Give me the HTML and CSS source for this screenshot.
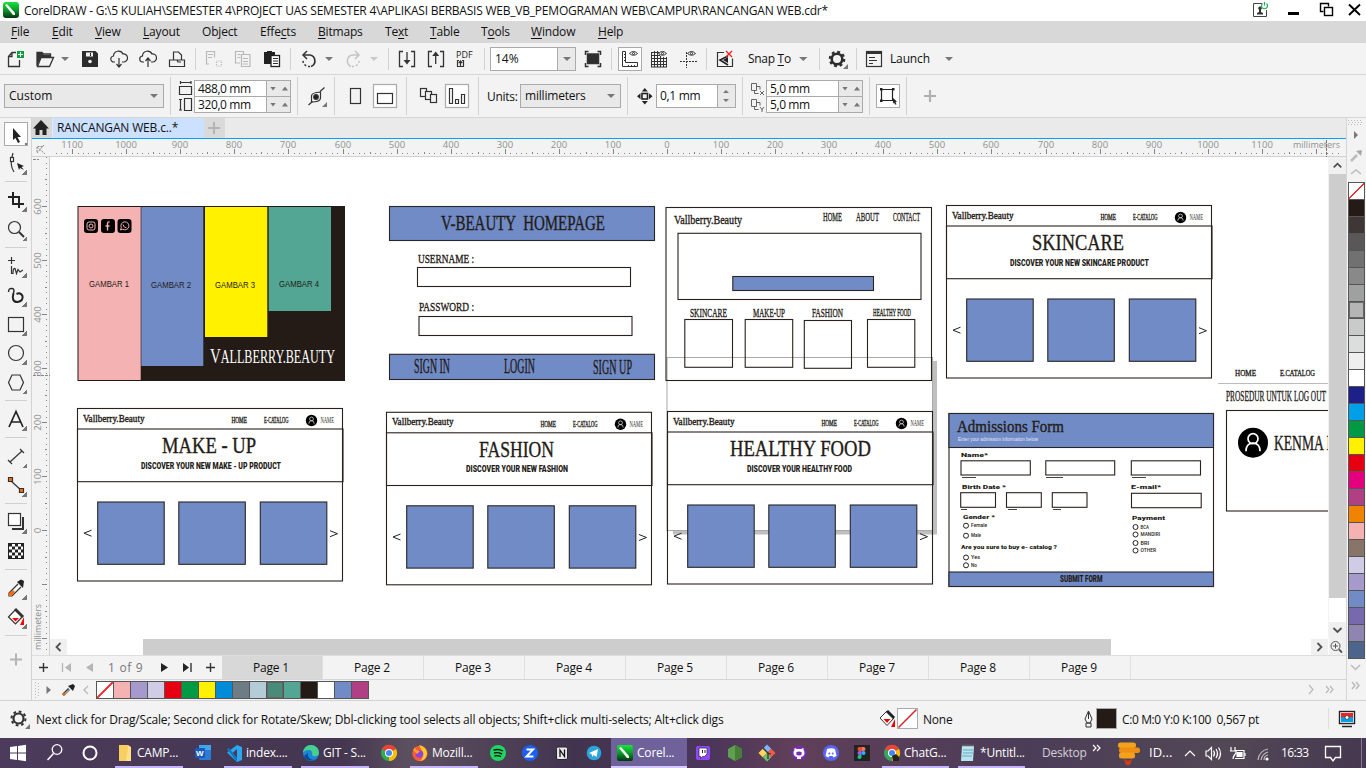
FILE: index.html
```
<!DOCTYPE html>
<html lang="en">
<head>
<meta charset="utf-8">
<title>CorelDRAW</title>
<link rel="stylesheet" href="styles.css">
</head>
<body>
<div class="app">
<header class="titlebar">
  <svg viewBox="0 0 24 21"><defs><linearGradient id="cg" x1="0" y1="0" x2="0" y2="1"><stop offset="0" stop-color="#19e33b"/><stop offset=".5" stop-color="#0a9a2c"/><stop offset="1" stop-color="#04330f"/></linearGradient></defs><rect x="3" y="2" width="16" height="16" rx="3" fill="url(#cg)"/><path d="M5 5l2-1 8 9v2h-2z" fill="#fff"/></svg>
  <span class="title">CorelDRAW - G:\5 KULIAH\SEMESTER 4\PROJECT UAS SEMESTER 4\APLIKASI BERBASIS WEB_VB_PEMOGRAMAN WEB\CAMPUR\RANCANGAN WEB.cdr*</span>
  <span class="grow"></span>
  <svg viewBox="1248 0 28 21"><path d="M1262 3.500h-8.500v13h13V10" fill="none" stroke="#444"/><path d="M1257 14.500v-1.500l2-1v-2l-1-2 2-2 2 2-1 2v2l2 1v1.500z" fill="#333"/><path d="M1262.500 3.500a3 3 0 1 0 4 0M1264.500 2v3.500" fill="none" stroke="#1fae4b" stroke-width="1.200"/></svg>
  <svg viewBox="1276 0 90 21" fill="none" stroke="#000"><path d="M1288 13.500h11" stroke-width="3"/><path d="M1323.500 11.500h-3v-8h8v3" stroke-width="1.400"/><rect x="1324.500" y="7.500" width="8" height="8" stroke-width="1.400"/><path d="M1349 4.500l11 10.500M1360 4.500l-11 10.500" stroke-width="1.900"/></svg>
</header>
<nav class="menubar"><span><u>F</u>ile</span><span><u>E</u>dit</span><span><u>V</u>iew</span><span><u>L</u>ayout</span><span>Ob<u>j</u>ect</span><span>Effe<u>c</u>ts</span><span><u>B</u>itmaps</span><span>Te<u>x</u>t</span><span><u>T</u>able</span><span>T<u>o</u>ols</span><span><u>W</u>indow</span><span><u>H</u>elp</span></nav>

<div class="toolbar">
  <svg viewBox="0 43 30 31"><path d="M16 52.500h-4l-3.500 4v10h11V60M8.500 56.500h3.500v-4" fill="none" stroke="#333" stroke-width="1.300"/><rect x="17" y="51" width="7" height="7" fill="#0b9e3a"/><path d="M18 54.500h5M20.500 52v5" stroke="#fff"/></svg>
  <svg viewBox="30 43 28 31"><path d="M37 66V52.500h5l1.500 1.500h7V57" fill="none" stroke="#333" stroke-width="1.300"/><path d="M37.500 66.500l3.500-9h12.500l-4 9z" fill="#f3f3f3" stroke="#333" stroke-width="1.300"/><path d="M37 66V53h5l2 2h6v2h-9z" fill="#333"/></svg>
  <svg viewBox="58 43 17 31"><path class="dd" d="M61 57h8l-4 4z"/></svg>
  <svg viewBox="75 43 29 31"><path d="M82 51h13.500l2.500 2.500V67H82z" fill="#2d2d2d"/><path d="M86 52.500h7v4h-7z" fill="#f3f3f3"/><path d="M90.500 53v3" stroke="#222"/><circle cx="90" cy="61.500" r="1.800" fill="#f3f3f3"/></svg>
  <svg viewBox="104 43 29 31" class="ln"><path d="M115 62h-1a3 3 0 0 1-.5-6 5 5 0 0 1 9.500-2 4 4 0 0 1 1 8h-2M119 58v8M116.500 64l2.500 3 2.500-3"/></svg>
  <svg viewBox="133 43 29 31" class="ln"><path d="M144 62h-1a3 3 0 0 1-.5-6 5 5 0 0 1 9.500-2 4 4 0 0 1 1 8h-2M148 67v-9M145.500 61l2.500-3 2.500 3"/></svg>
  <svg viewBox="162 43 33 31" class="ln"><path d="M173.500 60v-8h5l3 3v5M169.500 60v6.500h15V60zM174 60h3l1 2h3"/></svg>
  <i class="sep"></i>
  <svg viewBox="196 43 94 31" fill="none"><g stroke="#b9b9b9" stroke-width="1.200"><path d="M209 64h-2.500V51.500h8v6M208 54.500h5M208 57.500h4"/><rect x="216.500" y="61" width="5" height="5" stroke-dasharray="1 1"/><path d="M240 63h-4.500V51.500h8v3M237.500 54.500h3M237.500 57.500h3M241.500 54.500h8.500v12h-8.500zM243 58.500h5M243 61.500h5M243 64h5"/></g><path d="M264 52h3v-1h5v1h3v3h-4v9h-7z" fill="#222"/><rect x="271" y="55.500" width="8.500" height="11" fill="#fff" stroke="#222" stroke-width="1.300"/><path d="M273 58.500h5M273 61h5M273 63.500h5" stroke="#333"/></svg>
  <i class="sep"></i>
  <svg viewBox="291 43 97 31" fill="none"><path d="M304 55h6a6 6 0 0 1 1 11.500" stroke="#333" stroke-width="1.700"/><path d="M307 51l-4 4 4 4" stroke="#333" stroke-width="1.500"/><path d="M310 66.500a6 6 0 0 1-7-6" stroke="#333" stroke-width="1.500" stroke-dasharray="2 2"/><path class="dd" d="M325 57h8l-4 4z"/><g stroke="#c4c4c4" stroke-width="1.500"><path d="M358 55h-5a6 6 0 0 0-2 11.500M355 51l4 4-4 4"/><path d="M352 66.500a6 6 0 0 0 7-6" stroke-dasharray="2 2"/></g><path d="M370 57h8l-4 4z" fill="#c9c9c9"/></svg>
  <i class="sep"></i>
  <svg viewBox="389 43 61 31" fill="none" stroke="#333" stroke-width="1.300"><path d="M403 51.500h-3.500v15h3.500M411 51.500h3.500v15H411M407 52v10M432 51.500h-3.500v15h3.500M440 51.500h3.500v15H440M435.700 64V54" /><path d="M403.500 60h7L407 64.500zM432.200 56h7l-3.500-4.500z" fill="#333" stroke="none"/></svg>
  <svg viewBox="450 43 34 31" class="ln"><text x="456" y="58" class="pdf" textLength="16.500" lengthAdjust="spacingAndGlyphs">PDF</text><path d="M459 60.500h-1.500v6h6v-6H462M460.500 66v-4M458.800 63l1.700-2 1.700 2"/></svg>
  <i class="sep"></i>
  <div class="combo zoomlvl"><span>14%</span><b></b></div>
  <svg viewBox="577 43 34 31" fill="none" stroke="#333" stroke-width="1.500"><rect x="587.500" y="54" width="11" height="9.500" fill="#2d2d2d"/><path d="M585.500 55v-3.500h3M597.500 51.500h3V55M600.500 63v3.500h-3M588.500 66.500h-3V63"/></svg>
  <i class="sep"></i>
  <svg viewBox="612 43 94 31" fill="none"><rect x="618.500" y="47.500" width="23" height="23" fill="#fff" stroke="#aaa"/><g stroke="#333"><path d="M622.500 51.500h3v11h12v4h-15zM624 54.500h1.500M624 57.500h1.500M624 60.500h1.500M628.500 65v1M631.500 65v1M634.500 65v1" /><path d="M651.500 52v15M654.500 51v16M657.500 51v16M660.500 56v11M663.500 57v10M666.500 57v10M651 52.500h8M651 55.500h9M651 58.500h16M651 61.500h16M651 64.500h16M651 67h16"/><path d="M680 61.500h17M686.500 52v16" stroke-dasharray="2 1"/><path d="M629.500 53.500q4-4 8 0q-4 3.500-8 0zM658.500 53.500q4-4 8 0q-4 3.500-8 0zM687.500 53.500q4-4 8 0q-4 3.500-8 0z"/><circle cx="633.500" cy="53.500" r="1"/><circle cx="662.500" cy="53.500" r="1"/><circle cx="691.500" cy="53.500" r="1"/></g></svg>
  <i class="sep"></i>
  <svg viewBox="707 43 36 31" fill="none"><path d="M724 52.500h-6.500v14h15v-8" stroke="#333" stroke-width="1.200"/><path d="M728 56l-8 4 8 5" stroke="#222" stroke-width="1.600"/><path d="M723 60l5-3v6z" fill="#222"/><path d="M726 51l6 6M732 51l-6 6" stroke="#e22" stroke-width="1.400"/></svg>
  <span class="lab snap">Snap <u>T</u>o</span>
  <svg viewBox="794 43 25 31"><path class="dd" d="M799 57h8.500l-4.200 4z"/></svg>
  <i class="sep"></i>
  <svg viewBox="820 43 36 31"><circle cx="837" cy="59" r="5.300" fill="none" stroke="#2d2d2d" stroke-width="2.600"/><circle cx="837" cy="59" r="7.200" fill="none" stroke="#2d2d2d" stroke-width="2.200" stroke-dasharray="2.830 2.830"/><path d="M843 69h5v-5z" fill="#777"/></svg>
  <i class="sep"></i>
  <svg viewBox="857 43 31 31" fill="none" stroke="#333"><rect x="866.500" y="51.500" width="15" height="15" stroke-width="1.200"/><path d="M867 53h14" stroke-width="2"/><path d="M869 57.500h6M869 60.500h8M869 63.500h4"/></svg>
  <span class="lab launch">Launch</span>
  <svg viewBox="940 43 25 31"><path class="dd" d="M945 57h8l-4 4z"/></svg>
</div>

<div class="propbar">
  <div class="combo preset"><span>Custom</span><b></b></div>
  <i class="sep"></i>
  <svg viewBox="171 75 23 42" class="ln"><path d="M179.500 86.500h12v8h-12zM180 82.500h11M180.500 81v3M191 81v3M184.500 98.500h7v12h-7zM180.500 99v11M179 99.500h3M179 110h3"/></svg>
  <div class="pair"><span>488,0 mm</span><span>320,0 mm</span></div>
  <i class="sep m6"></i>
  <svg viewBox="298 75 36 42" class="ln"><path d="M308.500 105l4-3.500M320 91.500l4.500-4"/><path d="M311.500 102v-6q0-3.500 9-4v6q0 4-9 4z"/><circle cx="316" cy="97" r="2.300" fill="#222"/><path d="M322 107h5v-5z" fill="#777" stroke="none"/></svg>
  <i class="sep"></i>
  <svg viewBox="335 75 71 42" class="ln"><rect x="350.500" y="88.500" width="10" height="15"/><rect x="373.500" y="84.500" width="23" height="23" fill="#fff" stroke="#aaa"/><rect x="377.500" y="93.500" width="15" height="10"/></svg>
  <i class="sep"></i>
  <svg viewBox="407 75 71 42" class="ln"><g fill="#f3f3f3"><rect x="420.500" y="88.500" width="6" height="8"/><rect x="425.500" y="91.500" width="6" height="8"/><rect x="430.500" y="94.500" width="6" height="8"/></g><rect x="445.500" y="84.500" width="23" height="23" fill="#fff" stroke="#aaa"/><path d="M449.500 88.500h3v15h-3zM455.500 99.500h3v4h-3zM461.500 94.500h3v9h-3z"/></svg>
  <i class="sep"></i>
  <span class="lab units">Units:</span>
  <div class="combo unit"><span>millimeters</span><b></b></div>
  <i class="sep m6"></i>
  <svg viewBox="628 75 28 42"><rect x="642" y="93.500" width="5.500" height="5.500" fill="none" stroke="#222" stroke-width="1.600"/><path d="M644.800 88l3 3.500h-6zM644.800 104.500l3-3.500h-6zM637 96.300l3.500-3v6zM652.500 96.300l-3.500-3v6z" fill="#222"/></svg>
  <div class="spin"><span>0,1 mm</span><b></b></div>
  <i class="sep m6"></i>
  <svg viewBox="743 75 23 42" fill="none" stroke="#666"><path d="M751.500 83.500h5v7h-5zM757 86.500h3v3M754.500 91v2.500h4M751.500 99.500h5v7h-5zM757 102.500h3v3M754.500 107v2.500h4M760 91l4 4M764 91l-4 4M760 107l2 2.500 2-2.500M762 109v3"/></svg>
  <div class="pair"><span>5,0 mm</span><span>5,0 mm</span></div>
  <i class="sep m6"></i>
  <svg viewBox="870 75 36 42" fill="none"><rect x="876.500" y="84.500" width="23" height="23" fill="#fff" stroke="#aaa"/><path d="M881.500 89.500h11v11h-11z" stroke="#222" stroke-width="1.200"/><g fill="#222"><path d="M880 88h2.500v2.500H880zM892 88h2.500v2.500H892zM880 99.500h2.500v2.500H880zM893 98l4 3.500-1.500.5 1 2.500h-1.500l-1-2-1 1z"/></g></svg>
  <i class="sep"></i>
  <svg viewBox="907 75 40 42"><path d="M924 96h12M930 90v12" stroke="#b0b0b0" stroke-width="2.200"/></svg>
</div>

<main class="work">
  <aside class="toolbox">
    <div class="tool on"><svg viewBox="0 0 32 29"><path d="M12 8v12l2.500-2 2.500 5 2-1-2.500-5h3.500z" fill="#222"/></svg></div>
    <div class="tool"><svg viewBox="0 0 32 29" class="ln"><path d="M13 4q-4 12 1 19"/><rect x="10.500" y="8.500" width="3" height="4" fill="#fff"/><path d="M17 14l7 3-2.500 1 2.500 3-4-2-1 2z" fill="#222" stroke="none"/></svg></div>
    <hr>
    <div class="tool"><svg viewBox="0 0 32 29" fill="none" stroke="#222" stroke-width="2"><path d="M13 6v12h11M8 11h11v11"/></svg></div>
    <div class="tool"><svg viewBox="0 0 32 29" class="ln"><circle cx="14.500" cy="12.500" r="6"/><path d="M19 17l5 5" stroke-width="2"/></svg></div>
    <hr>
    <div class="tool"><svg viewBox="0 0 32 29" class="ln"><path d="M8 8.500h7M11.500 5v7M11.500 14v7.500h1.500q0-6 2-5l1.500 5 1.500-4 2 2.500 3-2"/></svg></div>
    <div class="tool"><svg viewBox="0 0 32 29" fill="none" stroke="#222"><path d="M8.500 11q0-4 3.500-3.500 3 .5 1.500 4.500" stroke-width="1.400"/><path d="M13.500 12q-2.500 9 4 9 6-1 5-6-2-4-6-2" stroke-width="2"/></svg></div>
    <div class="tool"><svg viewBox="0 0 32 29" class="ln"><rect x="8.500" y="7.500" width="15" height="14"/></svg></div>
    <div class="tool"><svg viewBox="0 0 32 29" class="ln"><circle cx="16" cy="14" r="7.500"/></svg></div>
    <div class="tool"><svg viewBox="0 0 32 29" class="ln"><path d="M12 7h8l3.500 7.500L20 22h-8l-3.500-7.500z"/></svg></div>
    <hr>
    <div class="tool"><svg viewBox="0 0 32 29" fill="none" stroke="#222" stroke-width="1.700"><path d="M9 22l7-15.500L23 22M11.500 17h9"/></svg></div>
    <hr>
    <div class="tool"><svg viewBox="0 0 32 29" class="ln"><path d="M10 20L22 9M8 18l4 4M20 7l4 4"/></svg></div>
    <div class="tool"><svg viewBox="0 0 32 29" class="ln"><path d="M11 10l11 10"/><path d="M8.500 6.500h4v4h-4zM19.500 17.500h4v4h-4z" fill="#ff6a00"/></svg></div>
    <hr>
    <div class="tool"><svg viewBox="0 0 32 29" class="ln"><path d="M23 9v12H12" stroke-width="2"/><rect x="8.500" y="5.500" width="12" height="12" fill="#fff"/></svg></div>
    <div class="tool plain"><svg viewBox="0 0 32 29"><rect x="8.500" y="6.500" width="15" height="15" fill="#fff" stroke="#222"/><path d="M9 8h14M9 14h14M9 20h14" stroke="#222" stroke-width="3" stroke-dasharray="3 3"/><path d="M12 11h12M12 17h12" stroke="#222" stroke-width="3" stroke-dasharray="3 3"/></svg></div>
    <hr>
    <div class="tool"><svg viewBox="0 0 32 29" class="ln"><path d="M18 10l-9 9v3h3l9-9" fill="#fff"/><path d="M9 22v-3l4-3 2 2-4 4z" fill="#f60" stroke="none"/><path d="M17 8l6 6 1-7-3-1.500z" fill="#222" stroke="none"/></svg></div>
    <div class="tool"><svg viewBox="0 0 32 29" class="ln"><path d="M8.500 14l7-7.500 7 7-7 7.500z" fill="#fff"/><path d="M15 6l8 8" stroke-width="3"/><path d="M12 15h7l-3.500 3.500zM24 14v8h-4z" fill="#f00" stroke="none"/></svg></div>
    <hr>
    <div class="tool plain last"><svg viewBox="0 0 32 29"><path d="M10 14.500h12M16 8.500v12" stroke="#b4b4b4" stroke-width="2"/></svg></div>
  </aside>
  <section class="center">
    <div class="tabs">
      <div class="home"><svg viewBox="0 0 20 20"><path d="M1 10.500L9 2l8 8.500h-2.500V17h-4v-5h-3v5h-4v-6.500z" fill="#222"/></svg></div>
      <div class="doc">RANCANGAN WEB.c..*</div>
      <div class="add"><svg viewBox="0 0 21 20"><path d="M4 10h12M10 4v12" stroke="#b4b4b4" stroke-width="2"/></svg></div>
    </div>
    <svg class="hruler" viewBox="32 139 1314 18" id="hr"></svg>
    <div class="view">
      <svg class="vruler" viewBox="32 157 18 498" id="vr"></svg>
      <div class="stage">
        <div class="stagerow">
          <svg class="canvas" viewBox="50 157 1278 482" id="cv"></svg>
          <div class="vscroll"><svg viewBox="0 0 17 18"><path d="M4.500 11l4-4 4 4" class="chev"/></svg><i></i><span></span><svg viewBox="0 0 17 17"><path d="M4.500 6l4 4 4-4" class="chev"/></svg></div>
        </div>
        <div class="hscroll"><svg viewBox="0 0 17 16"><path d="M10.500 4l-4 4 4 4" class="chev"/></svg><span></span><i></i><em></em><svg viewBox="0 0 17 16"><path d="M6.500 4l4 4-4 4" class="chev"/></svg><svg viewBox="0 0 17 16"><g fill="none" stroke="#555"><circle cx="6.500" cy="7" r="4.500"/><path d="M4 7h5M6.500 4.500v5"/><path d="M10 10.500l3 3" stroke-width="1.800"/></g></svg></div>
      </div>
    </div>
    <div class="pages">
      <svg viewBox="32 655 76 24"><path d="M39 666.500h9M43.500 662v9" stroke="#333" stroke-width="1.400"/><path d="M62.500 662v9" stroke="#b5b5b5" stroke-width="1.300"/><path d="M71 662v9l-6-4.500zM93 662v9l-7-4.500z" fill="#b5b5b5"/></svg>
      <span class="count">1 of 9</span>
      <svg viewBox="150 655 72 24"><path d="M161 662v9l7-4.500zM183 662v9l6-4.500z" fill="#222"/><path d="M191 662v9M206 666.500h9M210.500 662v9" stroke="#333" stroke-width="1.400"/></svg>
      <b class="cur">Page 1</b><b>Page 2</b><b>Page 3</b><b>Page 4</b><b>Page 5</b><b>Page 6</b><b>Page 7</b><b>Page 8</b><b>Page 9</b>
    </div>
    <div class="docpal">
      <svg viewBox="32 680 64 20"><path d="M35.500 682v16M38.500 683v15" stroke="#bbb" stroke-dasharray="1 2"/><path d="M46.500 686v8l4.500-4z" fill="#777"/><path d="M63 695l6-6" stroke="#333" stroke-width="2.600"/><path d="M64 694.500l5-5" stroke="#fff"/><path d="M68 686l5 5 2-5-2-2z" fill="#222"/><path d="M63 695l2-2" stroke="#f60" stroke-width="2"/><path d="M88 686l-4 4 4 4" fill="none" stroke="#bbb" stroke-width="1.400"/></svg>
      <div class="swrow" id="sw1"></div>
      <span class="grow"></span>
      <svg viewBox="1302 680 44 20" fill="none" stroke="#bbb" stroke-width="1.300"><path d="M1309 685l4 4.500-4 4.500M1326 686l3 3.500-3 3.500M1330 686l3 3.500-3 3.500"/></svg>
    </div>
  </section>
  <aside class="palette">
    <svg viewBox="1347 118 19 64"><path d="M1348 120.500h15M1349 122.500h15M1348 124.500h15" stroke="#bbb" stroke-dasharray="1 2"/><path d="M1354 131v8l4-4z" fill="#777"/><path d="M1351 161l6-6" stroke="#bbb" stroke-width="2.500"/><path d="M1356 151l5 5 1-5-1-1z" fill="#aaa"/><path d="M1351 174l5-4 5 4" fill="none" stroke="#bbb" stroke-width="1.500"/></svg>
    <div class="swcol" id="sw2"></div>
    <svg viewBox="1347 658 19 42" fill="none" stroke="#bbb" stroke-width="1.500"><path d="M1351 664l4.500 4.500 4.500-4.500M1352 681l3 3.500-3 3.500M1356 681l3 3.500-3 3.500"/></svg>
  </aside>
</main>

<footer class="status">
  <svg viewBox="0 701 36 37"><circle cx="18.500" cy="718.500" r="5" fill="none" stroke="#333" stroke-width="2.200"/><circle cx="18.500" cy="718.500" r="7" fill="none" stroke="#333" stroke-width="2" stroke-dasharray="2.750 2.750"/><path d="M25 729h5v-5z" fill="#777"/></svg>
  <span class="hint">Next click for Drag/Scale; Second click for Rotate/Skew; Dbl-clicking tool selects all objects; Shift+click multi-selects; Alt+click digs</span>
  <svg viewBox="875 701 22 37"><path d="M880 718l7-7 7 7-7 7.500z" fill="#fff" stroke="#333"/><path d="M887 711l7 7" stroke="#222" stroke-width="3"/><path d="M883.500 719h7l-3.500 4zM895 719v8h-4z" fill="#e00"/></svg>
  <svg viewBox="897 701 26 37"><rect x="897.500" y="708.500" width="20" height="20" fill="#fff" stroke="#aaa"/><path d="M898.500 727.500l18-18" stroke="#c22" stroke-width="1.500"/></svg>
  <span class="none">None</span>
  <svg viewBox="1080 701 42 37"><path d="M1088.500 711l-3.500 8 2 4h3l2-4zM1088.500 712v7M1086 723h5v4h-5z" fill="none" stroke="#333"/><rect x="1096.500" y="708.500" width="20" height="20" fill="#241b16" stroke="#aaa"/></svg>
  <span class="cmyk">C:0 M:0 Y:0 K:100&nbsp; 0,567 pt</span>
  <span class="grow"></span>
  <svg viewBox="1327 701 39 37"><path d="M1328.500 708v21" stroke="#ddd"/><rect x="1339.500" y="711.500" width="15" height="12" fill="#fff" stroke="#222" stroke-width="1.400"/><path d="M1341 713h12v4h-12z" fill="#e22"/><path d="M1341 717h12v5h-12z" fill="#00a0e9"/><circle cx="1347" cy="717.500" r="2" fill="#fff" stroke="#333" stroke-width=".7"/><path d="M1342 726.500h10" stroke="#222" stroke-width="1.500"/></svg>
</footer>

<div class="taskbar">
  <svg viewBox="0 738 115 30"><path d="M10 747l7-1v6.500h-7zM18 745.900l8-1.100v7.700h-8zM10 753.500h7v6.500l-7-1zM18 753.500h8v7.700l-8-1.100z" fill="#fff"/><g fill="none" stroke="#fff"><circle cx="57" cy="749.500" r="4.800" stroke-width="1.300"/><path d="M53.500 753.500l-6 6.500" stroke-width="1.500"/><circle cx="90" cy="753" r="6.500" stroke-width="2"/></g></svg>
  <div class="task open"><svg viewBox="115 738 22 30"><path d="M119 745h9l3 2v14h-12z" fill="#ffe08a"/><path d="M119 745h9v3l-2 13h-7z" fill="#f8cf5e"/></svg><span>CAMP...</span></div>
  <svg viewBox="183 738 41 30"><rect x="199" y="745" width="12" height="15" rx="1" fill="#2b7cd3"/><path d="M199 745h12v5h-12z" fill="#41a5ee"/><rect x="195" y="748" width="10" height="10" rx="1" fill="#185abd"/><text x="196" y="756" class="tiny">W</text></svg>
  <div class="task open"><svg viewBox="224 738 22 30"><path d="M237 745l5 2v13l-5 2-10-9.500z" fill="#2aa7f0"/><path d="M237 749l-5 4.500 5 4.500z" fill="#4a3c55"/><path d="M227 749l2-1 8 10v4z" fill="#0c78c4"/></svg><span>index....</span></div>
  <i class="g9"></i>
  <div class="task open"><svg viewBox="301 738 22 30"><circle cx="311" cy="753" r="8" fill="#1b86d8"/><path d="M303 753a8 8 0 0 1 16 0c0 4-6 4-7 2 1-3-1-5-3-5-3 0-5 1-6 3z" fill="#46cf8f"/><path d="M308 753q-1 6 6 7-8 2-10-4z" fill="#0c4a9a"/></svg><span>GIT - S...</span></div>
  <svg viewBox="369 738 41 30"><g transform="translate(389 753)"><use href="#chrome"/></g><defs><g id="chrome"><circle r="8" fill="#34a853"/><path d="M0 0L-7-4A8 8 0 0 1 7-4z" fill="#ea4335"/><path d="M0 0l7-4A8 8 0 0 1 0 8z" fill="#fbbc05"/><circle r="4" fill="#fff"/><circle r="3" fill="#4285f4"/></g></defs></svg>
  <div class="task open"><svg viewBox="410 738 22 30"><circle cx="420" cy="753.500" r="7.700" fill="#ff5a36"/><path d="M419 745q8 2 8 9-1 6-7 7 5-5 2-10z" fill="#ffca2c"/><circle cx="419.500" cy="754" r="3.800" fill="#8b45d8"/><path d="M413 750l2-3 1 3 4 1-3 3z" fill="#ff9d28"/></svg><span>Mozill...</span></div>
  <svg viewBox="478 738 133 30"><circle cx="498" cy="753" r="8" fill="#1ed760"/><path d="M493.500 750q5-1.500 9.500 1M494 753q4-1 8 1M494.500 756q3.500-1 6.500.7" stroke="#111" fill="none" stroke-width="1.400"/><circle cx="530" cy="753" r="8" fill="#1a5ff0"/><path d="M526.500 749.500h6.500l-6.500 7h7" stroke="#fff" fill="none" stroke-width="2"/><rect x="556.500" y="747" width="11" height="12.500" rx="1.500" fill="#e9e6ea" stroke="#2a2530"/><path d="M560 757v-7l4.500 6.500v-7" stroke="#111" fill="none" stroke-width="1.300"/><circle cx="594" cy="753" r="7.300" fill="#2ba3dc"/><path d="M589 753l9-4-1.500 8-3-2-1 2-1-3z" fill="#fff"/></svg>
  <div class="task active"><svg viewBox="611 738 26 30"><rect x="617" y="745" width="16" height="16" rx="2" fill="url(#cg)"/><path d="M619 748l2-1 8 9v2h-2z" fill="#fff"/></svg><span>Corel...</span></div>
  <svg viewBox="687 738 195 30"><rect x="696" y="746" width="14" height="14" rx="2" fill="#9146ff"/><path d="M699 748h8v6l-2.500 2.500h-2l-2 2v-2h-1.500z" fill="#fff" stroke="#222" stroke-width=".7"/><path d="M702.500 750v3M705 750v3" stroke="#222"/><path d="M735 745l7 4v8l-7 4-7-4v-8z" fill="#5fa04e"/><path d="M735 745l7 4v8l-7 4z" fill="#468038"/><g transform="rotate(45 767 753)"><path d="M761 747h6v6h-6z" fill="#80b3ff"/><path d="M767 747h6v6h-6z" fill="#f25b4a"/><path d="M761 753h6v6h-6z" fill="#ffd45c"/><path d="M767 753h6v6h-6z" fill="#6fc06a"/></g><path d="M763 748l5 5v6M768 753l3 1" stroke="#333" fill="none" stroke-width="1.300"/><circle cx="799" cy="753" r="7.500" fill="#7a2cb0"/><path d="M797 759v-2q-3.500-1-3.500-4 0-2 1-3v-2l2.500 1h4l2.500-1v2q1 1 1 3 0 3-3.500 4v2z" fill="#fff"/><path d="M796.500 752q2.500-1 5 0 1 3.500-2.500 3.500t-2.500-3.500z" fill="#7a2cb0"/><circle cx="831" cy="753" r="8" fill="#5865f2"/><path d="M827 749q4-1.500 8 0l1.500 7-3 1.500-1-1.500h-3l-1 1.500-3-1.500z" fill="#fff"/><circle cx="829.300" cy="753.500" r="1" fill="#5865f2"/><circle cx="832.700" cy="753.500" r="1" fill="#5865f2"/><rect x="854" y="745" width="16" height="16" fill="#222"/><path d="M861.500 747v4h-2a2 2 0 0 1 0-4z" fill="#f24e1e"/><path d="M861.500 747h2a2 2 0 0 1 0 4h-2z" fill="#ff7262"/><path d="M861.500 751v4h-2a2 2 0 0 1 0-4z" fill="#a259ff"/><circle cx="863.500" cy="753" r="2" fill="#1abcfe"/><path d="M861.500 755v2a2 2 0 1 1-2-2z" fill="#0acf83"/></svg>
  <div class="task open t2"><svg viewBox="882 738 22 30"><g transform="translate(892 753)"><use href="#chrome"/></g><path d="M892 756l4-2 3 3v4h-6z" fill="#222"/></svg><span>ChatG...</span></div>
  <i class="g9"></i>
  <div class="task open t2"><svg viewBox="958 738 22 30"><path d="M962 746h12l-1 15h-12z" fill="#b9e4ef"/><path d="M963 750h10M963 753h10M962 756h10" stroke="#64a9bd"/><path d="M962.500 745.500h12" stroke="#777" stroke-width="2" stroke-dasharray="1 1"/></svg><span>*Untitl...</span></div>
  <span class="desk">Desktop</span>
  <svg viewBox="1089 738 60 30"><path d="M1093 745l3 3-3 3M1097 745l3 3-3 3" fill="none" stroke="#fff" stroke-width="1.200"/><rect x="1118" y="742.500" width="18" height="5.500" rx="2.500" fill="#f4a21c"/><rect x="1119" y="747.500" width="21" height="5.500" rx="2.500" fill="#ee8f14"/><rect x="1119" y="752.500" width="16" height="6" rx="2.500" fill="#f4a21c"/><path d="M1124 759l4 2 4-2-2 6h-4z" fill="#d43a16"/></svg>
  <span class="idx">ID...</span>
  <svg viewBox="1180 738 101 30" fill="none" stroke="#fff" stroke-width="1.200"><path d="M1185 756l5-5 5 5"/><path d="M1206 751v5h2l3.500 3.500v-12L1208 751zM1213.500 750.500q2 3 0 6M1216 749q3 4.500 0 9M1218.500 747.500q4 6 0 12"/><path d="M1235 750.500h9v8h-9M1231 747v4M1235 747v4M1230 751h6v2q-3 3-3 6"/><path d="M1237 752.500h5v4h-5z" fill="#fff"/><path d="M1245 753v3"/><path d="M1258 760q1-9 10-11M1261 760q1-6 7-8M1264 760q0-4 4-5" stroke="#bbb"/><circle cx="1267" cy="759" r="1" fill="#fff"/></svg>
  <span class="clock">16:33</span>
  <svg viewBox="1310 738 56 30"><path d="M1325.500 746.500h15v11h-5l-2.500 3.500-2.500-3.500h-5z" fill="none" stroke="#fff" stroke-width="1.300"/><path d="M1361.500 738v30" stroke="#8a7a90"/></svg>
</div>
</div>
<script src="app.js"></script>
</body>
</html>
```
FILE: styles.css
```
* { box-sizing: border-box; }
body { margin: 0; overflow: hidden; font: 12px "Open Sans", "Noto Sans", sans-serif; color: #111; }
.app { width: 1366px; height: 768px; display: flex; flex-direction: column; background: #f3f3f3; }
svg { display: block; flex: none; }
span, b { white-space: nowrap; font-weight: normal; }
u { text-underline-offset: 2px; }
.grow { flex: 1; }
.ln { fill: none; stroke: #333; stroke-width: 1.2; }
.dd { fill: #777; stroke: none; }
.sep { width: 1px; background: #d2d2d2; flex: none; }
.m6 { margin-left: 6px; }
.lab { flex: none; }

.titlebar { height: 21px; background: #fff; display: flex; flex: none; }
.titlebar svg { height: 21px; }
.title { line-height: 21px; letter-spacing: -0.22px; }
.menubar { height: 22px; flex: none; background: #d8d8d8; padding-left: 11px; line-height: 22px; letter-spacing: -0.18px; display: grid; grid-template-columns: 41px 43px 48px 59px 58px 58px 67px 45px 51px 50px 67px 40px; }
.toolbar { height: 32px; flex: none; border-bottom: 1px solid #d5d5d5; display: flex; align-items: center; }
.toolbar > svg { height: 31px; }
.toolbar .sep { height: 22px; }
.pdf { font: 9.5px "Open Sans", sans-serif; fill: #222; stroke: none; }
.combo { display: flex; justify-content: space-between; height: 24px; flex: none; border: 1px solid #aaa; background: #e9e9e9; line-height: 22px; padding-left: 4px; }
.combo b { width: 18px; }
.combo b::after { content: ""; display: block; margin: 9px 0 0 5px; border: 4px solid transparent; border-top-color: #777; border-bottom: 0; width: 0; }
.zoomlvl { width: 86px; margin: 0 1px 0 5px; background: #fff; }
.zoomlvl b { border-left: 1px solid #aaa; background: #e9e9e9; }
.snap { width: 46px; padding-left: 5px; margin-right: 5px; letter-spacing: -0.3px; }
.launch { width: 52px; padding-left: 2px; letter-spacing: -0.15px; }

.propbar { height: 43px; flex: none; border-bottom: 1px solid #d5d5d5; display: flex; align-items: center; }
.propbar > svg { height: 42px; }
.propbar .sep { height: 38px; }
.preset { width: 160px; margin: 0 6px 0 4px; }
.pair { width: 97px; height: 33px; flex: none; border: 1px solid #aaa; background: linear-gradient(#aaa, #aaa) 0 15px / 100% 1px no-repeat, linear-gradient(90deg, #fff 71px, #aaa 71px, #aaa 72px, #e9e9e9 72px); display: grid; grid-template-rows: 16px 15px; line-height: 16px; letter-spacing: -0.4px; }
.pair span { padding-left: 3px; display: flex; justify-content: space-between; }
.pair span::after { content: ""; width: 18px; height: 4px; margin: 6px 2px 0 0; clip-path: polygon(0 0, 6px 0, 3px 4px, 0 0, 12px 4px, 15px 0, 18px 4px, 12px 4px); background: #777; }
.units { width: 41px; padding-left: 8px; letter-spacing: -0.3px; }
.unit { width: 101px; letter-spacing: -0.2px; }
.spin { width: 80px; height: 24px; flex: none; border: 1px solid #aaa; background: #fff; display: flex; justify-content: space-between; line-height: 22px; padding-left: 3px; letter-spacing: -0.3px; }
.spin b { width: 18px; background: #e9e9e9; border-left: 1px solid #aaa; padding: 5px 0 0 5px; }
.spin b::before, .spin b::after { content: ""; display: block; width: 0; border: 3px solid transparent; border-top: 0; border-bottom-color: #777; }
.spin b::after { margin-top: 6px; border: 3px solid transparent; border-bottom: 0; border-top-color: #777; }

.work { height: 583px; flex: none; display: flex; border-bottom: 1px solid #d2d2d2; }
.toolbox { width: 32px; flex: none; border-right: 1px solid #d2d2d2; padding-top: 2px; }
.tool { height: 29px; width: 31px; background: linear-gradient(135deg, #0000 50%, #777 50%) 22px 21px / 5px 5px no-repeat; }
.tool svg { width: 32px; height: 29px; }
.tool.plain { background: none; }
.tool.on { margin: 2px 0 3px 4px; width: 24px; height: 24px; background: linear-gradient(135deg, #0000 50%, #777 50%) 18px 18px / 5px 5px no-repeat #fff; border: 1px solid #aaa; }
.tool.on svg { margin: -3px 0 0 -4px; }
.last { margin-top: 9px; }
hr { height: 1px; border: 0; background: #d0d0d0; margin: 3px 4px 4px 5px; }
.center { width: 1314px; flex: none; display: flex; flex-direction: column; }
.tabs { height: 21px; flex: none; background: #eaeaea; border-bottom: 1px solid #00a2ff; display: flex; }
.home { width: 20px; margin-right: 1px; background: #d8d8d8; }
.home svg { height: 20px; }
.doc { width: 151px; background: #cce0ff; padding-left: 4px; line-height: 19px; letter-spacing: -0.15px; }
.add { width: 21px; background: #dadada; }
.add svg { height: 20px; }
.hruler { width: 1314px; height: 18px; }
.vruler { width: 18px; height: 498px; }
.rl { font: 9.5px "Open Sans", sans-serif; fill: #909090; }
.view { display: flex; height: 498px; flex: none; }
.stage { width: 1296px; }
.stagerow { display: flex; height: 482px; }
.canvas { width: 1278px; height: 482px; background: #fff; }
.vscroll { width: 17px; margin-left: 1px; background: #fff; display: flex; flex-direction: column; }
.vscroll svg { width: 17px; height: 17px; background: #f0f0f0; }
.vscroll i { height: 424px; background: #cdcdcd; }
.vscroll span { flex: 1; }
.chev { fill: none; stroke: #505050; stroke-width: 1.8; }
.hscroll { height: 16px; display: flex; background: #fff; }
.hscroll svg { width: 17px; height: 16px; background: #f0f0f0; }
.hscroll span { width: 76px; }
.hscroll i { width: 968px; background: #cdcdcd; }
.hscroll em { flex: 1; }
.hscroll svg:last-child { margin-left: 1px; }
.pages { height: 25px; border-top: 1px solid #dedede; border-bottom: 1px solid #d5d5d5; display: flex; line-height: 23px; }
.pages svg { height: 24px; }
.count { width: 42px; color: #777; letter-spacing: 0.7px; }
.pages b { width: 101px; text-align: center; border-right: 1px solid #e0e0e0; padding-right: 2px; letter-spacing: -0.2px; }
.pages .cur { background: #d8d8d8; }
.docpal { height: 20px; display: flex; align-items: center; }
.docpal svg { height: 20px; }
.swrow { display: flex; border: 1px solid #555; }
.sw { width: 17px; height: 16px; border-right: 1px solid #555; flex: none; }
.swrow .sw:last-child { border-right: 0; width: 16px; }
.swcol { width: 17px; border: 1px solid #555; border-bottom: 0; margin-left: 1px; }
.swcol .sw { width: 15px; height: 17px; border-right: 0; border-bottom: 1px solid #555; }
.sw.sel { box-shadow: inset 0 0 0 1px #666; }
.sw.no { background: linear-gradient(135deg, #fff 46%, #f03030 47%, #f03030 53%, #fff 54%); }
.palette { width: 20px; flex: none; border-left: 1px solid #d5d5d5; }
.palette svg { width: 19px; }

.status { height: 37px; flex: none; display: flex; line-height: 37px; }
.status svg { height: 37px; }
.hint { width: 839px; letter-spacing: -0.17px; }
.none { width: 157px; letter-spacing: -0.2px; }
.cmyk { letter-spacing: -0.38px; }

.taskbar { height: 30px; flex: none; display: flex; color: #fff; line-height: 29px; background: linear-gradient(90deg, #4c3b5b, #443650 25%, #5c5060 30%, #42344f 42%, #4b3659 52%, #603f59 58%, #4b3d58 75%, #524855 90%, #453850); }
.taskbar svg { height: 30px; }
.task { display: flex; width: 68px; flex: none; letter-spacing: -0.2px; }
.open { border-bottom: 2px solid #c4b5fa; }
.open svg { margin-bottom: -2px; }
.t2 { width: 67px; }
.active { width: 76px; background: #6f629b; border-bottom: 2px solid #d3c9ff; }
.g9 { width: 9px; flex: none; }
.desk { padding-left: 17px; width: 64px; color: #d5cfd8; letter-spacing: -0.25px; }
.idx { width: 31px; font-size: 13px; }
.clock { width: 29px; letter-spacing: -0.6px; }
.tiny { font: bold 8px "Liberation Sans", sans-serif; fill: #fff; }

.fancy { font-family: "Liberation Serif", serif; fill: #241b16; }
.firm { stroke: #241b16; stroke-width: 0.35; }
.heavy { font-family: "Roboto", sans-serif; font-weight: 900; fill: #241b16; }
.arial { font-family: "Liberation Sans", sans-serif; fill: #241b16; }
.box { fill: none; stroke: #2a211d; stroke-width: 1.1; }
.blue { fill: #708bc6; stroke: #2a2526; stroke-width: 1.1; }
```
FILE: app.js
```
const byId = id => document.getElementById(id);

// Text run stretched between x1 and x2
const text = (s, x1, x2, y, size, cls = 'fancy', extra = '') =>
  `<text x="${x1}" y="${y}" font-size="${size}" class="${cls}" textLength="${x2 - x1}" lengthAdjust="spacingAndGlyphs" xml:space="preserve" ${extra}>${s}</text>`;
const rect = (x1, y1, x2, y2, cls = 'box', extra = '') =>
  `<rect x="${x1}" y="${y1}" width="${x2 - x1}" height="${y2 - y1}" class="${cls}" ${extra}/>`;
const avatar = (x, y, r) =>
  `<g transform="translate(${x} ${y}) scale(${r / 15})"><circle r="15" fill="#000"/><g fill="none" stroke="#fff" stroke-width="1.700"><circle cy="-4" r="5"/><path d="M-7 8.500q0-8 7-8t7 8"/></g></g>`;

function rulers() {
  let h = '<rect x="32" y="139" width="1314" height="18" fill="#f3f3f3"/><path d="M32 156.500h1314" stroke="#d0d0d0"/><path d="M37 147l8 7M37 152v-5.500h6M44 145l-7 8" fill="none" stroke="#888" stroke-dasharray="2 1"/>';
  for (let i = -113; i <= 124; i++) {
    const x = Math.floor(667.5 + i * 5.408) + 0.5;
    if (x < 55 || x > 1344) continue;
    const top = i % 10 === 0 ? 149 : i % 5 === 0 ? 152 : 153;
    h += `<path d="M${x} ${top}V154" stroke="#858585"/>`;
    if (i % 10 === 0 && Math.abs(i) < 120) h += `<text x="${x - 0.5}" y="148" class="rl" text-anchor="middle">${Math.abs(i) * 10}</text>`;
  }
  h += text('millimeters', 1293, 1340, 148, 9.5, 'rl') + '<path d="M1326.500 140v17" stroke="#777" stroke-dasharray="3 1"/>';
  byId('hr').innerHTML = h;

  let v = '<rect x="32" y="157" width="18" height="498" fill="#f3f3f3"/><path d="M49.500 157V655" stroke="#d0d0d0"/>';
  for (let i = -22; i <= 69; i++) {
    const y = Math.round(530 - i * 5.4) + 0.5;
    const left = i % 10 === 0 ? 42 : i % 5 === 0 ? 45 : 46;
    v += `<path d="M${left} ${y}H47" stroke="#858585"/>`;
    if (i % 10 === 0 && i >= 0) v += `<text transform="translate(41 ${y}) rotate(-90)" class="rl" text-anchor="middle">${i * 10}</text>`;
  }
  v += '<g transform="translate(41 650) rotate(-90)">' + text('millimeters', 0, 46, 0, 9.5, 'rl') + '</g>';
  v += '<path d="M33 159.500h6M33 375.500h17" stroke="#888" stroke-dasharray="3 1"/>';
  byId('vr').innerHTML = v;
}

function product(x, y, title, t1, t2, sub, s1, s2) {
  const X = n => x + n, Y = n => y + n;
  return rect(x, y, X(265), Y(172.5)) + rect(x, Y(20.500), X(265.500), Y(73.200)) +
    text('Vallberry.Beauty', X(5.5), X(67), Y(13), 10, 'fancy firm') +
    text('HOME', X(154), X(169.500), Y(14.500), 8, 'fancy firm') +
    text('E-CATALOG', X(186.500), X(211), Y(14.500), 8, 'fancy firm') +
    avatar(X(234), Y(12), 5.700) + text('NAME', X(243), X(256.500), Y(14.500), 8) +
    text(title, t1, t2, Y(44.500), 22.500, 'fancy firm') +
    text(sub, s1, s2, Y(60), 8.8, 'heavy') +
    [20.200, 101.300, 182.800].map(o => rect(X(o), Y(93.500), X(o + 66.500), Y(155.800), 'blue')).join('') +
    `<path d="M${X(14)} ${Y(121.700)}l-7.500 3 7.500 3M${X(252.500)} ${Y(122.200)}l7.500 3-7.500 3" fill="none" stroke="#222"/>`;
}

function canvas() {
  let s = '<rect x="673" y="530.500" width="264" height="4" fill="#bfbfbf"/><rect x="932" y="361" width="5" height="173" fill="#bfbfbf"/><rect x="667" y="357.500" width="265.500" height="173" fill="#fff" stroke="#aaa"/>';

  s += rect(78, 206.500, 344.500, 380.500, '', 'fill="#241b16" stroke="#241b16"');
  [[78.500, 140.700, 380, '#f4b2b2'], [141.300, 203.300, 366, '#708bc6'], [205, 267.300, 337, '#fff100'], [268.700, 331, 311, '#53a693']]
    .forEach(c => { s += rect(c[0], 207, c[1], c[2], '', `fill="${c[3]}"`); });
  [[89, 287], [151, 287.500], [215, 287.500], [279, 287]]
    .forEach((p, i) => { s += text('GAMBAR ' + (i + 1), p[0], p[0] + 40, p[1], 8.5, 'arial'); });
  s += text('V<tspan font-size="18">ALLBERRY.BEAUTY</tspan>', 210, 335, 363, 22, 'fancy', 'style="fill:#fff"');
  [84, 101, 117.500].forEach(x => { s += `<rect x="${x}" y="219" width="14" height="14" rx="3"/>`; });
  s += '<g fill="none" stroke="#f4b2b2"><rect x="87" y="222" width="8" height="8" rx="2"/><circle cx="91" cy="226" r="2"/><path d="M109.500 222q-2-.5-2 2v6.500M105.500 226h4" stroke-width="1.400"/><path d="M120.500 230l.8-2.500a4 4 0 1 1 1.500 1.700zM123 224.500q.5 3 3.500 3.500"/></g>';

  s += rect(389.500, 206.500, 654.500, 240.500, 'blue') + text('V-BEAUTY  HOMEPAGE', 441, 605, 230, 20.5, 'fancy firm') +
    text('USERNAME :', 418, 474, 262.500, 12.5, 'fancy firm') + rect(417.500, 267.500, 630.500, 286.500) +
    text('PASSWORD :', 419, 474, 310.500, 13, 'fancy firm') + rect(419, 316.500, 632, 335.500) +
    rect(389.500, 354.300, 654.500, 379.500, 'blue') +
    text('SIGN IN', 414, 450, 373, 20, 'fancy firm') + text('LOGIN', 504, 535, 373, 20, 'fancy firm') + text('SIGN UP', 593, 632, 373.500, 20, 'fancy firm');

  s += rect(666, 207.500, 931.500, 380.500) + text('Vallberry.Beauty', 674, 742, 224, 13.5, 'fancy firm') +
    text('HOME', 823, 842, 220.500, 13.5, 'fancy firm') + text('ABOUT', 856, 879, 220.500, 13.5, 'fancy firm') + text('CONTACT', 893, 920, 220.500, 13.5, 'fancy firm') +
    rect(678, 233.300, 921, 299.500) + rect(732.800, 276.500, 873.500, 290.500, 'blue') +
    text('SKINCARE', 690, 727, 316.500, 13, 'fancy firm') + text('MAKE-UP', 753, 785, 317, 13, 'fancy firm') + text('FASHION', 812, 843, 317, 13, 'fancy firm') + text('HEALTHY FOOD', 873, 911, 315.500, 10, 'fancy firm') +
    rect(684.800, 319.500, 732.500, 367.300) + rect(745.200, 319.500, 792.700, 367.300) + rect(804.300, 320.500, 851.500, 368.300) + rect(867.500, 319.500, 914.800, 367.300);

  s += product(946.5, 205.5, 'SKINCARE', 1032, 1124, 'DISCOVER YOUR NEW SKINCARE PRODUCT', 1010, 1149);
  s += product(77.5, 408.5, 'MAKE - UP', 162, 256, 'DISCOVER YOUR NEW MAKE - UP PRODUCT', 141, 281);
  s += product(386.5, 412.300, 'FASHION', 479, 554, 'DISCOVER YOUR NEW FASHION', 466, 568);
  s += product(667.5, 411.500, 'HEALTHY FOOD', 730, 871, 'DISCOVER YOUR HEALTHY FOOD', 747, 852);

  s += rect(949, 413.500, 1213.500, 586.500) + rect(949, 413.500, 1213.500, 447.500, 'blue') + rect(949, 572, 1213.500, 586.500, 'blue') +
    text('Admissions Form', 957, 1064, 432, 17, 'fancy firm') + text('Enter your admission information below', 958, 1038, 440.500, 5.5, 'arial', 'style="fill:#e4e9f8"') +
    text('Name*', 961, 988, 457, 6, 'heavy') + text('Birth Date *', 962, 1006, 489, 6, 'heavy') + text('E-mail*', 1131, 1161, 489, 6, 'heavy') +
    text('Gender *', 963, 995, 519, 6, 'heavy') + text('Payment', 1132, 1165, 520, 6, 'heavy') + text('Are you sure to buy e- catalog ?', 961, 1057, 549, 6, 'heavy') +
    text('SUBMIT FORM', 1060, 1102.500, 582, 8.5, 'heavy');
  [[961, 460.800, 1030.300, 475], [1045.800, 460.800, 1114.700, 475], [1131.300, 460.800, 1200.500, 475], [960.700, 492.700, 995.500, 507.300], [1006.500, 492.700, 1041.300, 507.300], [1052.300, 492.700, 1087, 507.300], [1131.500, 493.300, 1201.200, 507.700]]
    .forEach(r => { s += rect(...r); });
  s += '<path d="M962 477.500h14M1046 477.500h17M1132 477.500h14M961 509.500h6M1008 509.500h9M1053 509.500h8" stroke="#444"/>';
  [[966, 525.700, 'Female', 987], [966, 535.700, 'Male', 981], [966, 557.500, 'Yes', 980], [966, 565.300, 'No', 977], [1135.500, 527, 'BCA', 1149], [1135.500, 534.500, 'MANDIRI', 1160], [1135.500, 543, 'BRI', 1149], [1135.500, 550.500, 'OTHER', 1156]]
    .forEach(r => { s += `<circle cx="${r[0]}" cy="${r[1]}" r="2.500" fill="none" stroke="#222"/>` + text(r[2], r[0] + 5, r[3], r[1] + 1.7, 5.5, 'heavy', 'style="font-weight:500"'); });

  s += text('HOME', 1235, 1256, 375.500, 9, 'fancy firm') + text('E.CATALOG', 1280, 1315, 375.500, 9, 'fancy firm') + '<path d="M1218 383.500h110" stroke="#bbb"/>' +
    text('PROSEDUR UNTUK LOG OUT', 1226, 1326, 401, 14, 'fancy firm') + rect(1226.500, 410.500, 1340, 511) + avatar(1253, 442.700, 15) +
    text('KENMA I', 1274, 1331, 450, 20.5, 'fancy firm');
  byId('cv').innerHTML = s;
}

function swatches(id, list, selected) {
  byId(id).innerHTML = list.map((c, i) => `<div class="sw${c ? '' : ' no'}${i === selected ? ' sel' : ''}"${c ? ` style="background:${c}"` : ''}></div>`).join('');
}

rulers();
canvas();
swatches('sw1', ['', '#f4b2b2', '#a699cc', '#d0cce6', '#e60012', '#009944', '#fff100', '#008cd8', '#6e7d85', '#b4cbd8', '#478b78', '#53a693', '#241b16', '#fff', '#708bc6', '#b04083'], 10);
swatches('sw2', ['', '#241b16', '#3f3636', '#595757', '#727171', '#898989', '#9fa0a0', '#b5b5b6', '#c9caca', '#dcdddd', '#efefef', '#fff', '#1d2088', '#00a0e9', '#009944', '#fff100', '#e60012', '#e4007f', '#b04083', '#f08300', '#f4b2b2', '#87756a', '#d0cce6', '#a699cc', '#708bc6', '#7869ae', '#9084b0', '#4d648d'], 7);
```
